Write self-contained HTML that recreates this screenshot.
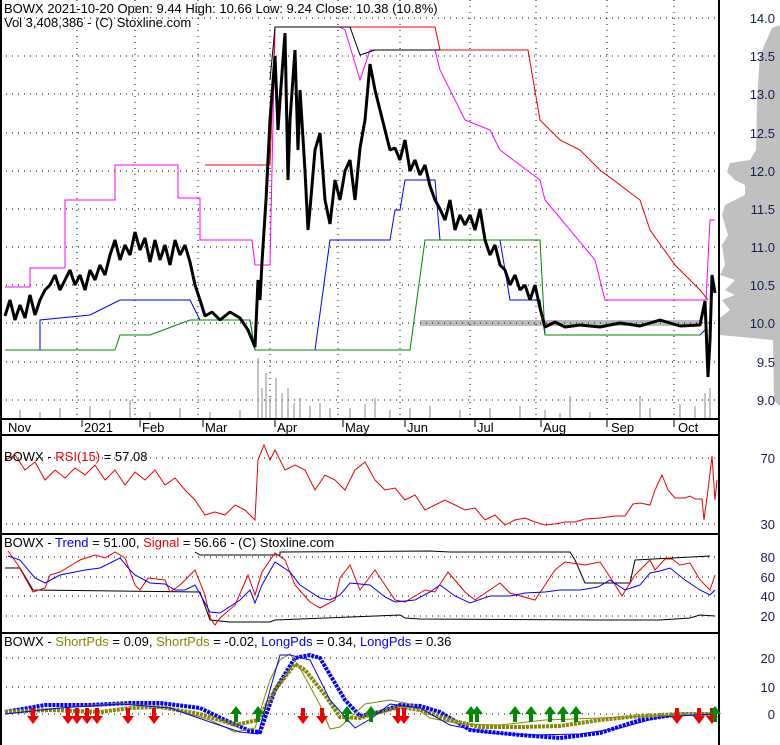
<!DOCTYPE html>
<html><head><meta charset="utf-8"><style>
html,body{margin:0;padding:0;background:#fff;}
svg{display:block;font-family:"Liberation Sans",sans-serif;}
</style></head><body>
<svg width="780" height="745" viewBox="0 0 780 745" xmlns="http://www.w3.org/2000/svg">
<rect width="780" height="745" fill="#fff"/>
<!-- volume profile -->
<polygon fill="#c0c0c0" points="780,25 772,28 760,55 757,100 756,150 750,160 730,163 727,172 735,180 745,185 745,195 725,205 722,215 728,235 722,245 725,265 720,275 735,280 725,290 735,295 722,300 730,310 720,318 720,335 773,340 774,400 778,405 780,405"/>
<rect x="420" y="320" width="282" height="6" fill="#bbb"/>
<!-- grid dots main -->
<g stroke="#000" stroke-width="1" stroke-dasharray="1,5">
<line x1="0" y1="18" x2="719" y2="18"/><line x1="0" y1="56" x2="719" y2="56"/><line x1="0" y1="94" x2="719" y2="94"/><line x1="0" y1="133" x2="719" y2="133"/><line x1="0" y1="171" x2="719" y2="171"/><line x1="0" y1="209" x2="719" y2="209"/><line x1="0" y1="247" x2="719" y2="247"/><line x1="0" y1="285" x2="719" y2="285"/><line x1="0" y1="323" x2="719" y2="323"/><line x1="0" y1="362" x2="719" y2="362"/><line x1="0" y1="400" x2="719" y2="400"/>
<line x1="77" y1="0" x2="77" y2="418"/><line x1="135" y1="0" x2="135" y2="418"/><line x1="198" y1="0" x2="198" y2="418"/><line x1="270" y1="0" x2="270" y2="418"/><line x1="338" y1="0" x2="338" y2="418"/><line x1="400" y1="0" x2="400" y2="418"/><line x1="470" y1="0" x2="470" y2="418"/><line x1="536" y1="0" x2="536" y2="418"/><line x1="607" y1="0" x2="607" y2="418"/><line x1="674" y1="0" x2="674" y2="418"/>
<line x1="0" y1="458" x2="719" y2="458"/><line x1="0" y1="524" x2="719" y2="524"/>
<line x1="0" y1="557" x2="719" y2="557"/><line x1="0" y1="577" x2="719" y2="577"/><line x1="0" y1="596" x2="719" y2="596"/><line x1="0" y1="616" x2="719" y2="616"/>
<line x1="0" y1="658" x2="719" y2="658"/><line x1="0" y1="687" x2="719" y2="687"/><line x1="0" y1="714" x2="719" y2="714"/>
</g>
<!-- volume bars -->
<g stroke="#888" stroke-width="1">
<path d="M20 418v-8M40 418v-6M60 418v-10M90 418v-12M110 418v-8M130 418v-18M150 418v-6M180 418v-10M210 418v-6M240 418v-8M258 418v-60M262 418v-30M266 418v-45M270 418v-20M276 418v-40M282 418v-25M288 418v-30M294 418v-15M300 418v-20M310 418v-12M320 418v-15M330 418v-10M350 418v-10M365 418v-14M375 418v-20M390 418v-8M410 418v-10M430 418v-12M460 418v-8M490 418v-10M520 418v-12M545 418v-8M560 418v-5M570 418v-22M590 418v-6M640 418v-22M650 418v-10M680 418v-14M695 418v-12M705 418v-25M710 418v-30"/>
</g>
<!-- envelope lines -->
<polyline fill="none" stroke="#f0f" stroke-width="1" points="5,287 30,287 30,268 65,268 65,200 115,200 115,165 178,165 178,198 200,198 200,240 252,240 255,265 270,265 275,27 340,27 345,30 360,80 370,50 435,50 440,70 465,120 490,130 500,150 540,180 545,200 595,260 605,300 635,300 635,300 700,300 706,300 710,220 715,220"/>
<polyline fill="none" stroke="#e00" stroke-width="1" points="205,165 270,165 275,27 435,27 440,50 528,50 540,120 560,140 580,150 600,170 640,200 650,230 675,265 700,290 708,300"/>
<polyline fill="none" stroke="#000" stroke-width="1" points="270,80 275,27 350,27 360,55 375,50 440,50"/>
<polyline fill="none" stroke="#00f" stroke-width="1" points="5,350 40,350 40,320 90,315 120,300 190,300 200,320 250,320 255,350 315,350 330,240 390,240 395,210 400,210 405,180 435,180 440,240 500,240 510,300 540,300 545,335 700,335 705,330"/>
<polyline fill="none" stroke="#080" stroke-width="1" points="5,350 115,350 120,335 150,335 190,320 250,320 255,350 410,350 425,240 540,240 545,335 700,335"/>
<!-- price -->
<polyline fill="none" stroke="#000" stroke-width="3" stroke-linejoin="bevel" points="5,316 10,300 15,320 20,305 25,318 30,295 35,315 40,300 45,290 50,285 55,275 60,290 65,280 70,270 75,285 80,275 85,290 90,270 95,280 100,265 105,275 110,255 115,240 120,260 125,245 130,255 135,232 140,250 145,238 150,262 155,240 160,260 165,245 170,265 175,240 180,255 185,245 190,262 195,285 200,300 205,316 212,312 220,320 230,312 240,318 248,330 255,347 258,280 260,300 262,262 266,200 270,120 275,56 278,130 280,100 285,33 288,180 290,120 295,50 298,150 300,90 305,171 308,230 310,209 315,150 320,133 325,200 330,224 335,180 340,200 345,171 350,160 355,200 360,148 365,120 370,64 375,90 380,110 385,130 390,150 395,148 400,160 405,140 410,171 415,160 420,175 425,165 430,186 435,200 440,209 445,220 450,200 455,230 460,215 465,225 470,215 475,230 480,209 485,240 490,255 495,245 500,265 505,270 510,285 515,275 520,290 525,285 530,300 535,285 540,308 545,327 555,322 565,327 580,325 600,327 620,323 640,326 660,320 680,326 700,325 705,301 708,377 710,340 712,275 715,293"/>
<!-- frames -->
<g stroke="#000" fill="none" stroke-width="2">
<line x1="719" y1="0" x2="719" y2="745"/>
<line x1="0" y1="419" x2="719" y2="419"/>
<line x1="0" y1="435" x2="719" y2="435"/>
<line x1="0" y1="534" x2="719" y2="534"/>
<line x1="0" y1="633" x2="719" y2="633"/>
<line x1="1" y1="0" x2="1" y2="745"/>
</g>
<g stroke="#000"><path d="M82 419v8M140 419v8M203 419v8M275 419v8M343 419v8M405 419v8M475 419v8M541 419v8M607 419v8M674 419v8"/></g>
<!-- date labels -->
<g font-size="13" fill="#000">
<text x="8" y="432">Nov</text><text x="84" y="432">2021</text><text x="142" y="432">Feb</text><text x="205" y="432">Mar</text><text x="277" y="432">Apr</text><text x="345" y="432">May</text><text x="407" y="432">Jun</text><text x="477" y="432">Jul</text><text x="543" y="432">Aug</text><text x="611" y="432">Sep</text><text x="678" y="432">Oct</text>
</g>
<!-- right axis -->
<g font-size="13" fill="#102050" text-anchor="end">
<text x="775" y="23">14.0</text><text x="775" y="61">13.5</text><text x="775" y="99">13.0</text><text x="775" y="138">12.5</text><text x="775" y="176">12.0</text><text x="775" y="214">11.5</text><text x="775" y="252">11.0</text><text x="775" y="290">10.5</text><text x="775" y="328">10.0</text><text x="775" y="367">9.5</text><text x="775" y="405">9.0</text>
<text x="775" y="463">70</text><text x="775" y="529">30</text>
<text x="775" y="562">80</text><text x="775" y="582">60</text><text x="775" y="601">40</text><text x="775" y="621">20</text>
<text x="775" y="663">20</text><text x="775" y="692">10</text><text x="775" y="719">0</text>
</g>
<!-- RSI -->
<polyline fill="none" stroke="#e00" stroke-width="1" points="5,460 15,455 25,470 35,462 45,480 55,470 65,478 75,468 85,475 95,465 105,480 115,470 125,485 135,472 145,480 155,470 165,485 175,478 185,490 195,500 205,515 215,512 225,515 235,505 245,510 255,520 258,460 264,445 270,460 275,450 285,470 295,465 305,470 315,490 325,475 335,480 345,490 355,470 365,462 375,480 385,490 395,488 405,500 415,495 425,510 435,505 445,500 455,505 465,510 475,508 485,520 495,515 505,525 515,520 525,518 535,522 545,525 555,524 565,522 575,522 585,519 600,518 615,516 625,516 633,504 640,503 650,505 655,490 662,475 668,490 675,498 685,498 690,496 695,499 702,499 704,520 708,490 712,456 715,500 717,480"/>
<!-- Trend panel -->
<polyline fill="none" stroke="#000" stroke-width="1" points="5,568 20,568 33,590 200,592 210,620 230,622 270,622 275,620 400,615 405,618 420,619 600,620 660,620 690,618 700,615 715,616"/>
<polyline fill="none" stroke="#000" stroke-width="1" points="195,552 200,555 280,555 280,552 430,551 450,552 570,552 575,560 585,583 630,583 635,560 710,556"/>
<polyline fill="none" stroke="#e00" stroke-width="1" points="8,551 18,565 33,592 45,588 50,575 60,572 70,566 80,560 95,555 105,558 115,552 125,558 135,585 140,590 148,578 165,580 170,592 180,585 195,570 205,595 210,618 215,625 220,618 235,605 248,575 255,595 262,572 275,553 285,560 295,585 310,602 320,608 335,600 340,578 350,565 360,590 375,570 385,585 395,600 405,602 425,590 435,592 448,572 465,592 475,600 500,583 510,593 535,600 545,585 555,570 565,562 585,565 600,562 612,580 622,596 635,575 650,560 655,570 665,559 672,559 680,565 690,563 700,580 710,590 715,575"/>
<polyline fill="none" stroke="#00f" stroke-width="1" points="8,556 20,560 35,578 45,583 60,575 85,570 100,568 120,558 130,570 135,575 150,583 165,584 175,590 185,590 195,585 210,612 220,613 240,600 250,590 255,603 262,585 275,562 290,572 300,585 320,598 330,600 340,595 350,583 370,585 385,597 395,602 415,600 430,592 440,585 455,596 470,603 490,596 510,596 525,593 545,592 560,590 580,590 598,587 610,580 625,590 640,585 650,573 660,571 670,568 685,580 700,590 710,595 715,590"/>
<!-- bottom panel -->
<polyline fill="none" stroke="#00f" stroke-width="4" stroke-dasharray="3,1" points="5,712 45,705 90,705 130,703 160,703 200,708 225,720 250,731 260,732 275,690 295,658 310,655 320,658 345,700 360,716 380,712 400,705 420,706 440,712 470,730 490,732 520,735 560,738 600,733 640,720 680,714 715,714"/>
<polyline fill="none" stroke="#880" stroke-width="4" stroke-dasharray="3,1" points="5,712 50,710 100,712 130,708 160,707 200,714 235,725 258,720 275,690 295,664 305,670 325,695 340,717 360,718 380,712 400,707 420,710 450,720 480,727 520,727 560,726 600,720 640,716 680,714 715,714"/>
<polyline fill="none" stroke="#880" stroke-width="1" points="5,714 60,708 120,703 170,708 210,720 235,732 255,728 270,680 280,660 290,654 300,668 320,705 330,729 340,727 365,704 390,700 410,704 430,718 460,724 500,725 545,720 600,718 650,716 715,714"/>
<polyline fill="none" stroke="#00f" stroke-width="1" points="5,714 60,708 120,704 170,708 210,722 240,732 258,734 270,690 280,655 290,655 310,660 330,700 355,728 372,718 390,704 420,708 450,725 490,733 530,735 580,734 620,728 660,717 715,714"/>
<!-- arrows -->
<g fill="#e00">
<path id="dn" d="M-2 708h4v8h4l-6 8-6-8h4z" transform="translate(33,0)"/>
<use href="#dn" x="35"/><use href="#dn" x="44"/><use href="#dn" x="54"/><use href="#dn" x="64"/><use href="#dn" x="95"/><use href="#dn" x="121"/><use href="#dn" x="270"/><use href="#dn" x="289"/><use href="#dn" x="365"/><use href="#dn" x="371"/><use href="#dn" x="644"/><use href="#dn" x="666"/><use href="#dn" x="679"/>
</g>
<g fill="#080">
<path id="up" d="M0 706l6 8h-4v8h-4v-8h-4z" transform="translate(236,0)"/>
<use href="#up" x="22"/><use href="#up" x="111"/><use href="#up" x="135"/><use href="#up" x="235"/><use href="#up" x="241"/><use href="#up" x="279"/><use href="#up" x="295"/><use href="#up" x="314"/><use href="#up" x="327"/><use href="#up" x="340"/><use href="#up" x="479"/>
</g>
<!-- headers -->
<g font-size="13" fill="#000" style="white-space:pre" xml:space="preserve">
<text x="4" y="13">BOWX  2021-10-20 Open: 9.44  High: 10.66  Low: 9.24  Close: 10.38 (10.8%)</text>
<text x="4" y="27">Vol 3,408,386   - (C) Stoxline.com</text>
<text x="4" y="461">BOWX - <tspan fill="#e00">RSI(15)</tspan> = 57.08</text>
<text x="4" y="547">BOWX  - <tspan fill="#00f">Trend</tspan> = 51.00, <tspan fill="#e00">Signal</tspan> = 56.66  - (C) Stoxline.com</text>
<text x="4" y="646">BOWX - <tspan fill="#880">ShortPds</tspan> = 0.09, <tspan fill="#880">ShortPds</tspan> = -0.02, <tspan fill="#00f">LongPds</tspan> = 0.34, <tspan fill="#00f">LongPds</tspan> = 0.36</text>
</g>
</svg>
</body></html>
